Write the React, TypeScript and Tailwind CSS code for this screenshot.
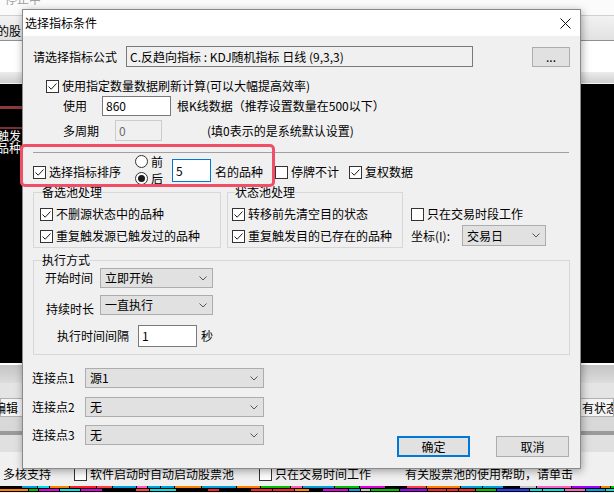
import React from "react";

function Check({ checked = false }: { checked?: boolean }) {
  return (
    <span className="flex h-[13px] w-[13px] shrink-0 items-center justify-center border border-[#333333] bg-white">
      {checked && (
        <svg width="11" height="11" viewBox="0 0 11 11">
          <path d="M1.5 5.5 L4.2 8.2 L9.5 2.5" fill="none" stroke="#1a1a1a" strokeWidth="1" />
        </svg>
      )}
    </span>
  );
}

function CheckLabel({
  checked = false,
  children,
  className = "",
}: {
  checked?: boolean;
  children: React.ReactNode;
  className?: string;
}) {
  return (
    <div className={"flex h-4 items-center gap-[3px] leading-4 " + className}>
      <Check checked={checked} />
      <span className="whitespace-nowrap">{children}</span>
    </div>
  );
}

function Radio({ selected = false }: { selected?: boolean }) {
  return (
    <span className="flex h-[13px] w-[13px] shrink-0 items-center justify-center rounded-full border border-[#333333] bg-white">
      {selected && <span className="h-[7px] w-[7px] rounded-full bg-[#1a1a1a]" />}
    </span>
  );
}

function Combo({ text, className = "" }: { text: string; className?: string }) {
  return (
    <div
      className={
        "flex shrink-0 items-center justify-between border border-[#adadad] bg-[#e1e1e1] pl-[4px] pr-[5px] " +
        className
      }
    >
      <span className="whitespace-nowrap leading-4">{text}</span>
      <svg width="8" height="5" viewBox="0 0 8 5">
        <path d="M0.5 0.5 L4 4 L7.5 0.5" fill="none" stroke="#555" strokeWidth="1" />
      </svg>
    </div>
  );
}

function Stripes() {
  const palette = ["#ff2020", "#e000e0", "#f0e000", "#ff8000", "#00c000", "#00a0e0", "#2040ff", "#a000ff", "#ff4040", "#c0c0c0", "#00e0e0", "#ff60c0"];
  const rows: { x: number; w: number; c: string; y: number }[] = [];
  let seed = 7;
  const rnd = () => {
    seed = (seed * 9301 + 49297) % 233280;
    return seed / 233280;
  };
  for (let r = 0; r < 2; r++) {
    let x = 0;
    while (x < 614) {
      const w = 10 + Math.floor(rnd() * 26);
      const c = palette[Math.floor(rnd() * palette.length)];
      if (rnd() > 0.15) rows.push({ x, w: w - 1, c, y: r * 3 });
      x += w;
    }
  }
  return (
    <svg width="614" height="6" viewBox="0 0 614 6" className="block">
      <rect x="0" y="0" width="614" height="6" fill="#000" />
      {rows.map((s, i) => (
        <rect key={i} x={s.x} y={s.y} width={s.w} height="2" fill={s.c} />
      ))}
    </svg>
  );
}

export default function App() {
  return (
    <div className="relative h-[493px] w-[614px] overflow-hidden bg-[#f0f0f0] font-['Noto_Sans_CJK_SC','Microsoft_YaHei',sans-serif] text-[12px] text-black">
      {/* background application */}
      <div className="flex h-full flex-col">
        <div className="h-[15px] overflow-hidden bg-[#fbfbfb]">
          <span className="-mt-[9px] ml-[5px] block leading-4 text-[#a0a0a0]">停止中</span>
        </div>
        <div className="h-px bg-[#d0d0d0]" />
        <div className="flex h-[25px] items-end border-b border-[#909090] bg-gradient-to-b from-[#f2f2f2] to-[#e2e2e2] pb-[1px]">
          <span className="-ml-[3px] leading-4">的股</span>
        </div>
        <div className="h-[31px] bg-white" />
        <div className="h-[11px] bg-gradient-to-b from-[#ececec] to-[#cfcfcf]" />
        <div className="h-px bg-[#f4f4f4]" />
        <div className="flex h-[279px] flex-col bg-black">
          <div className="mt-[22px] h-[3px] w-[24px] bg-[#8b3a3a]" />
          <div className="mt-[18px] h-[2px] w-[24px] bg-[#7a3030]" />
          <div className="-ml-[3px] mt-[1px] text-[12px] leading-[12px] text-white">
            <div>触发</div>
            <div>品种</div>
          </div>
        </div>
        <div className="h-[2px] bg-white" />
        <div className="h-[18px] bg-gradient-to-b from-[#c4c4c4] to-[#dcdcdc]" />
        <div className="h-[15px] bg-[#e4e4e4]" />
        <div className="flex h-[19px] items-center justify-between bg-[#e8e8e8]">
          <div className="flex h-full items-center border border-[#b0b0b0] bg-[#f4f4f4] pr-[8px]">
            <span className="-ml-[7px] leading-4">编辑</span>
          </div>
          <div className="flex h-full w-[34px] items-center overflow-hidden border border-[#b0b0b0] bg-[#f4f4f4] pl-[1px]">
            <span className="whitespace-nowrap leading-4">有状态池</span>
          </div>
        </div>
        <div className="h-[14px] bg-[#d8d8d8]" />
        <div className="h-[4px] bg-[#9a9a9a]" />
        <div className="h-[17px] bg-[#e0e0e0]" />
        <div className="h-[12px] bg-[#f0f0f0]" />
        <div className="flex h-[20px] items-center bg-[#f0f0f0]">
          <span className="ml-[3px] w-[71px] whitespace-nowrap leading-4">多核支持</span>
          <CheckLabel className="w-[185px]">软件启动时自动启动股票池</CheckLabel>
          <CheckLabel className="w-[146px]">只在交易时间工作</CheckLabel>
          <span className="whitespace-nowrap leading-4">有关股票池的使用帮助，请单击</span>
        </div>
        <div className="h-[2px] bg-[#f0f0f0]" />
        <Stripes />
      </div>

      {/* dialog window */}
      <div className="absolute left-[22px] top-[9px] flex h-[460px] w-[559px] flex-col border border-[#8a8a8a] bg-[#f0f0f0] shadow-[1px_2px_8px_rgba(0,0,0,0.35)]">
        <div className="flex h-[26px] shrink-0 items-center justify-between bg-white">
          <span className="pl-[2px] leading-4">选择指标条件</span>
          <svg width="11" height="11" viewBox="0 0 11 11" className="mr-[9px]">
            <path d="M0.5 0.5 L10.5 10.5 M10.5 0.5 L0.5 10.5" stroke="#111" strokeWidth="1" />
          </svg>
        </div>

        <div className="flex flex-col pl-[10px]">
          {/* formula row */}
          <div className="mt-[10px] flex h-[21px] items-center">
            <span className="w-[93px] leading-4">请选择指标公式</span>
            <div className="flex h-[21px] w-[347px] items-center border border-[#7a7a7a] bg-[#f0f0f0] pl-[3px]">
              <span className="whitespace-nowrap leading-4">C.反趋向指标 : KDJ随机指标 日线 (9,3,3)</span>
            </div>
            <div className="ml-[59px] flex h-[20px] w-[38px] items-center justify-center border border-[#adadad] bg-[#e1e1e1] leading-4">
              ...
            </div>
          </div>

          <CheckLabel checked className="ml-[13px] mt-[11px]">
            使用指定数量数据刷新计算(可以大幅提高效率)
          </CheckLabel>

          <div className="mt-[2px] flex h-[20px] items-center">
            <span className="ml-[30px] w-[39px] leading-4">使用</span>
            <div className="flex h-[20px] w-[69px] items-center border border-[#7a7a7a] bg-white pl-[3px] leading-4">860</div>
            <span className="ml-[6px] whitespace-nowrap leading-4">根K线数据（推荐设置数量在500以下）</span>
          </div>

          <div className="mt-[4px] flex h-[21px] items-center">
            <span className="ml-[30px] w-[52px] leading-4">多周期</span>
            <div className="flex h-[21px] w-[47px] items-center border border-[#cccccc] bg-[#f0f0f0] pl-[3px] leading-4 text-[#6d6d6d]">
              0
            </div>
            <span className="ml-[45px] whitespace-nowrap leading-4">(填0表示的是系统默认设置)</span>
          </div>

          <div className="mt-[11px] h-px w-[536px] bg-[#a0a0a0]" />

          {/* sort row */}
          <div className="mt-[1px] flex h-[30px] items-start">
            <CheckLabel checked className="mt-[10px] w-[102px]">
              选择指标排序
            </CheckLabel>
            <div className="mt-[1px] flex w-[37px] flex-col gap-[4px]">
              <div className="flex h-[13px] items-center gap-[3px] leading-4">
                <Radio />
                <span>前</span>
              </div>
              <div className="flex h-[13px] items-center gap-[3px] leading-4">
                <Radio selected />
                <span>后</span>
              </div>
            </div>
            <div className="mt-[5px] flex h-[23px] w-[39px] items-center border border-[#0078d7] bg-white pl-[3px] leading-4">5</div>
            <span className="ml-[4px] mt-[10px] w-[60px] whitespace-nowrap leading-4">名的品种</span>
            <CheckLabel className="mt-[10px] w-[74px]">停牌不计</CheckLabel>
            <CheckLabel checked className="mt-[10px]">
              复权数据
            </CheckLabel>
          </div>

          {/* groups */}
          <div className="flex items-start">
            <fieldset className="w-[188px] border border-[#d8d8d8] pb-[3px] pl-[6px]">
              <legend className="ml-[2px] leading-4">备选池处理</legend>
              <CheckLabel checked className="mt-[6px]">
                不删源状态中的品种
              </CheckLabel>
              <CheckLabel checked className="mt-[6px]">
                重复触发源已触发过的品种
              </CheckLabel>
            </fieldset>
            <fieldset className="ml-[6px] w-[176px] border border-[#d8d8d8] pb-[3px] pl-[4px]">
              <legend className="ml-[3px] leading-4">状态池处理</legend>
              <CheckLabel checked className="mt-[6px]">
                转移前先清空目的状态
              </CheckLabel>
              <CheckLabel checked className="mt-[6px]">
                重复触发目的已存在的品种
              </CheckLabel>
            </fieldset>
            <div className="ml-[8px] flex flex-col">
              <CheckLabel className="mt-[22px]">只在交易时段工作</CheckLabel>
              <div className="mt-[3px] flex items-center">
                <span className="w-[51px] whitespace-nowrap leading-4">坐标(I):</span>
                <Combo text="交易日" className="h-[21px] w-[84px]" />
              </div>
            </div>
          </div>

          {/* execution */}
          <fieldset className="mt-[4px] w-[537px] border border-[#d8d8d8] pb-[7px] pl-[8px]">
            <legend className="leading-4">执行方式</legend>
            <div className="flex h-[20px] items-center">
              <span className="ml-[3px] w-[55px] leading-4">开始时间</span>
              <Combo text="立即开始" className="h-[20px] w-[113px]" />
            </div>
            <div className="mt-[7px] flex h-[20px] items-start">
              <span className="ml-[4px] mt-[6px] w-[54px] leading-4">持续时长</span>
              <Combo text="一直执行" className="h-[20px] w-[113px]" />
            </div>
            <div className="mt-[10px] flex h-[22px] items-center">
              <span className="ml-[15px] w-[81px] whitespace-nowrap leading-4">执行时间间隔</span>
              <div className="flex h-[22px] w-[59px] items-center border border-[#7a7a7a] bg-white pl-[3px] leading-4">1</div>
              <span className="ml-[4px] leading-4">秒</span>
            </div>
          </fieldset>

          {/* connection points & buttons */}
          <div className="mt-[13px] flex items-start">
            <div className="-ml-[1px] flex flex-col">
              <div className="flex h-[20px] items-center">
                <span className="w-[53px] leading-4">连接点1</span>
                <Combo text="源1" className="h-[20px] w-[179px]" />
              </div>
              <div className="mt-[9px] flex h-[20px] items-center">
                <span className="w-[53px] leading-4">连接点2</span>
                <Combo text="无" className="h-[20px] w-[179px]" />
              </div>
              <div className="mt-[8px] flex h-[20px] items-center">
                <span className="w-[53px] leading-4">连接点3</span>
                <Combo text="无" className="h-[20px] w-[179px]" />
              </div>
            </div>
            <div className="ml-[133px] mt-[68px] flex h-[21px] w-[73px] items-center justify-center border-2 border-[#0078d7] bg-[#e1e1e1] leading-4">
              确定
            </div>
            <div className="ml-[26px] mt-[68px] flex h-[21px] w-[73px] items-center justify-center border border-[#adadad] bg-[#e1e1e1] leading-4">
              取消
            </div>
          </div>
        </div>
      </div>

      {/* red highlight annotation */}
      <div className="pointer-events-none absolute left-[20px] top-[144px] h-[43px] w-[255px] rounded-[5px] border-[3px] border-[#ef5068]" />
    </div>
  );
}
